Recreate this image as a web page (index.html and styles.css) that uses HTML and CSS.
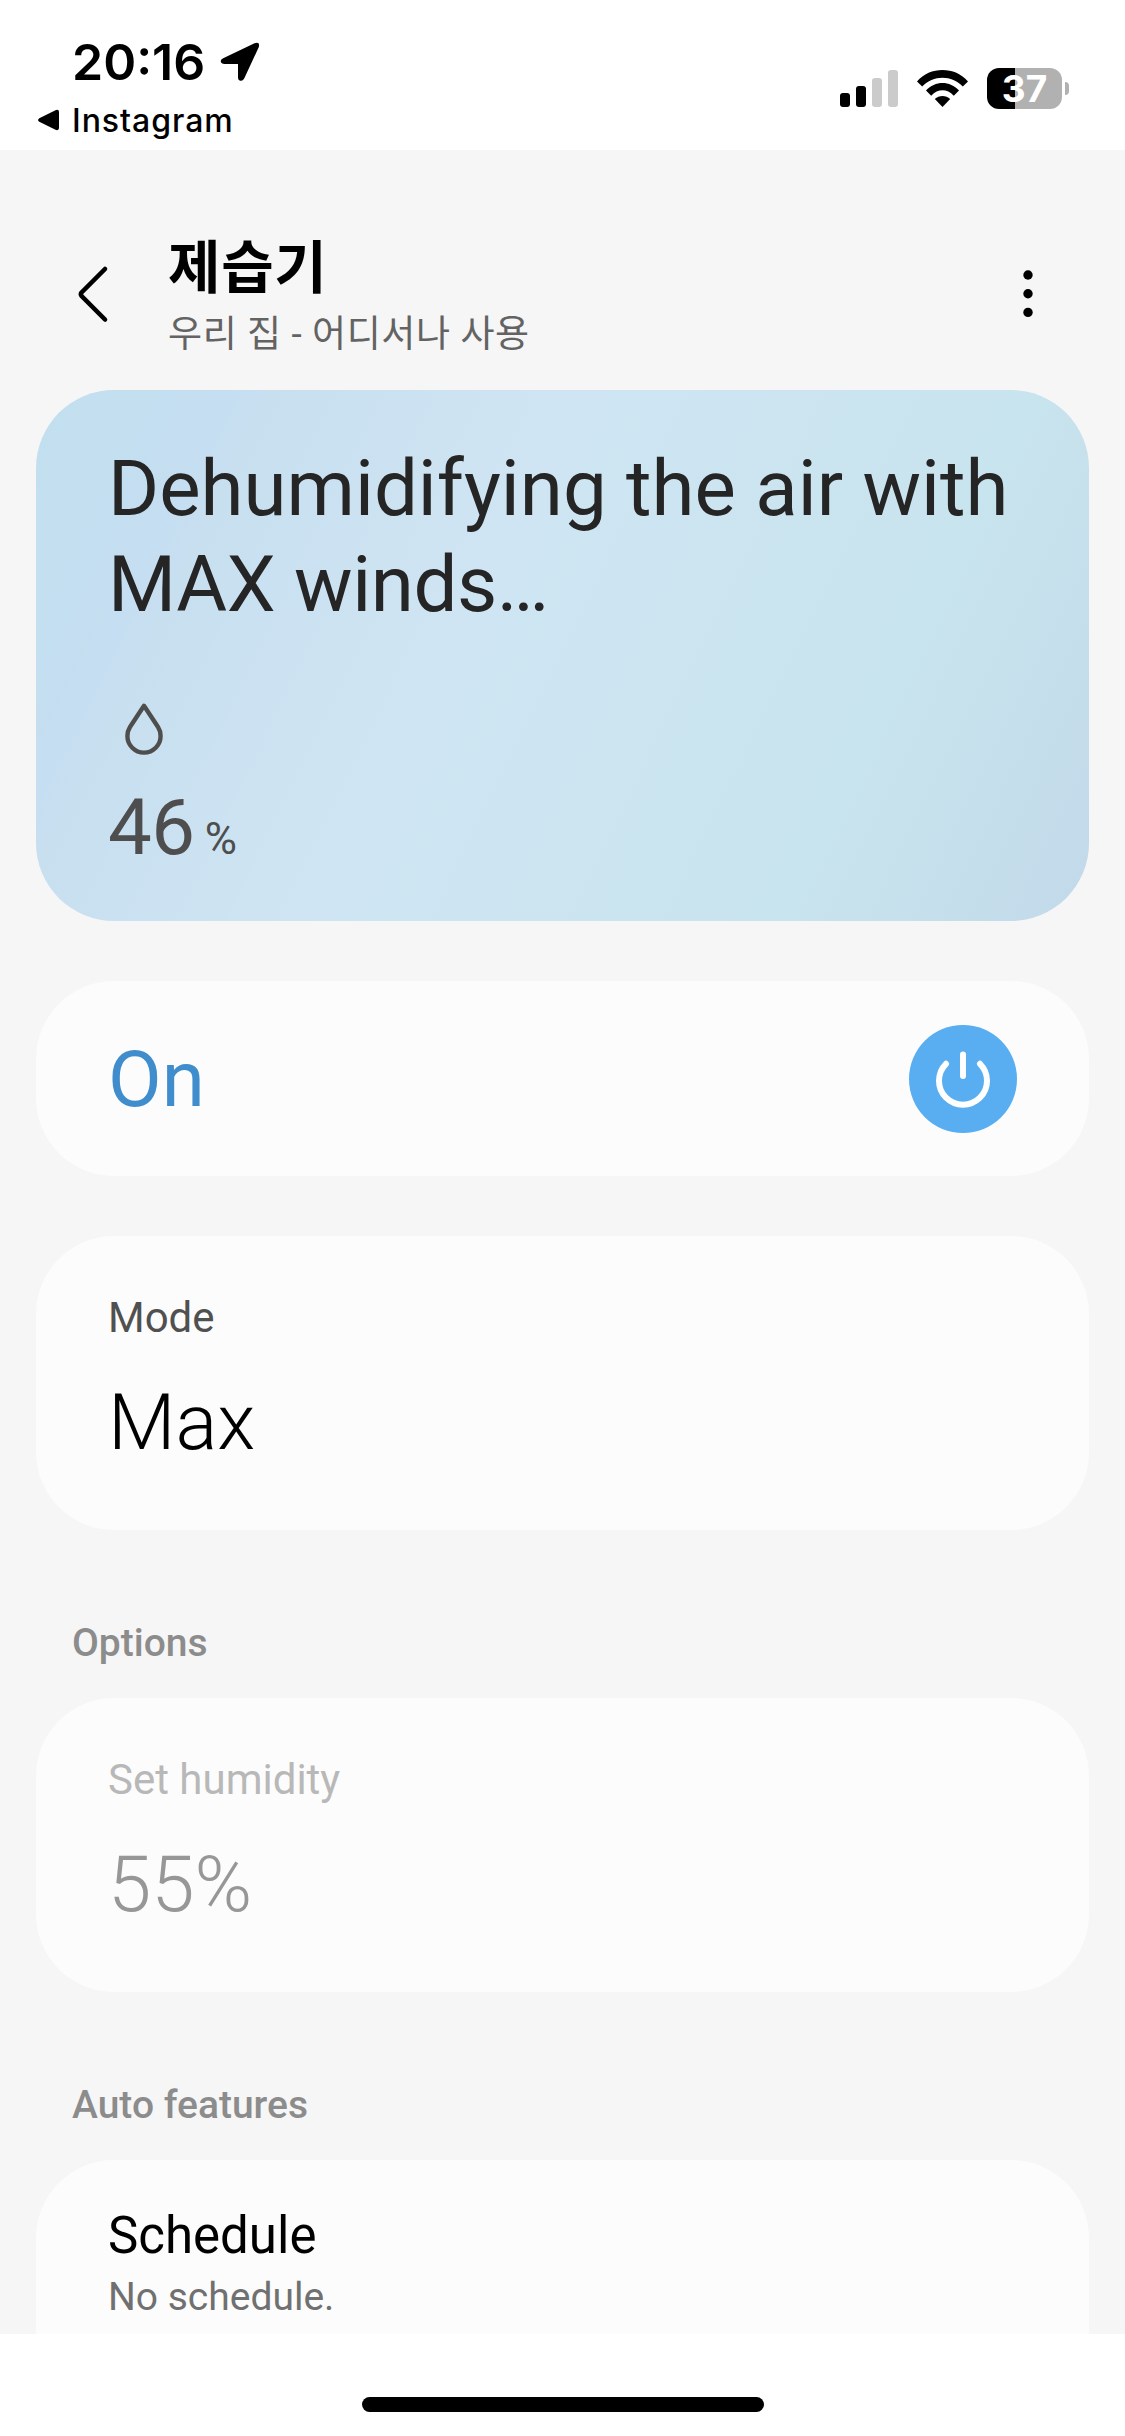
FILE: index.html
```html
<!DOCTYPE html>
<html lang="ko">
<head>
<meta charset="utf-8">
<title>제습기</title>
<link rel="stylesheet" href="styles.css">
</head>
<body>
<header class="status-bar">
  <div class="status-left">
    <div class="clock">
      <span class="time">20:16</span>
      <svg class="location-icon" width="40" height="40" viewBox="0 0 40 40"><path d="M3.2 16.2 L34.5 1.3 Q40.5-.7 38.7 5.3 L24.2 36.5 Q22.6 39.5 19.6 38.5 Q18 37.8 18 35.5 V22 H4.5 Q1.2 22 .7 19.3 Q.6 17.3 3.2 16.2Z"/></svg>
    </div>
    <div class="return-link">
      <svg width="22" height="22" viewBox="0 0 22 22"><path d="M1.3 9.2 L18 1 Q21 .2 21 3 V19 Q21 21.700 18 21 L1.300 12.800 Q-1.200 11 1.300 9.200Z"/></svg>
      <span>Instagram</span>
    </div>
  </div>
  <div class="status-right">
    <svg width="58" height="38" viewBox="0 0 58 38"><rect y="23" width="10" height="14" rx="3"/><rect x="16" y="16" width="10" height="21" rx="3"/><rect x="32" y="8" width="10" height="29" rx="3" fill="#cbcbcb"/><rect x="48" width="10" height="37" rx="3" fill="#cbcbcb"/></svg>
    <svg width="51" height="38" viewBox="0 0 51 38"><path d="M0 11.500 C13-3.800 38-3.800 51 11.500 L45.800 16.500 C35 4.800 16 4.800 5.200 16.500Z"/><path d="M9 20.500 C18 10.500 33 10.500 42 20.500 L36.800 25.700 C30 18.500 21 18.500 14.200 25.700Z"/><path d="M17.800 29 C22 25 29 25 33.200 29 L25.500 37Z"/></svg>
    <div class="battery"><div class="battery-body">37</div><div class="battery-tip"></div></div>
  </div>
</header>

<main class="screen">
  <nav class="app-bar">
    <svg class="back" width="34" height="60" viewBox="0 0 34 60"><path d="M29 5 L5.600 28.500 Q4.200 30.300 5.600 32 L29 55.500"/></svg>
    <div class="titles">
      <h1>제습기</h1>
      <p>우리 집 - 어디서나 사용</p>
    </div>
    <svg class="more" width="10" height="50" viewBox="0 0 10 50"><circle cx="5" cy="5" r="4.700"/><circle cx="5" cy="23.700" r="4.700"/><circle cx="5" cy="42.400" r="4.700"/></svg>
  </nav>

  <section class="card hero">
    <p class="headline">Dehumidifying the air with <span class="headline-end">MAX winds…</span></p>
    <svg class="drop" width="40" height="54" viewBox="0 0 40 54"><path d="M20 4.800 L34 26 Q36.600 30 36.600 35 A16.600 16.600 0 0 1 3.400 35 Q3.400 30 6 26Z"/></svg>
    <div class="reading"><span class="number">46</span><span class="unit">%</span></div>
  </section>

  <section class="card power">
    <span class="state">On</span>
    <button class="power-button" aria-label="Power"><svg width="108" height="108" viewBox="0 0 108 108"><path d="M54 29.500V51M37 38.800A24 24 0 1 0 71 38.800"/></svg></button>
  </section>

  <section class="card setting">
    <p class="label">Mode</p>
    <p class="value">Max</p>
  </section>

  <h2>Options</h2>
  <section class="card setting disabled">
    <p class="label">Set humidity</p>
    <p class="value">55%</p>
  </section>

  <h2>Auto features</h2>
  <section class="card schedule">
    <p class="name">Schedule</p>
    <p class="detail">No schedule.</p>
  </section>
</main>
<footer class="home-area"><div class="home-indicator"></div></footer>
</body>
</html>
```
FILE: styles.css
```css
* { box-sizing: border-box; }
body, h1, h2, p { margin: 0; }
body {
  width: 1125px;
  height: 2436px;
  display: flex;
  flex-direction: column;
  background: #fff;
  color: #000;
  font-family: Roboto, "Noto Sans CJK KR", sans-serif;
  overflow: hidden;
}
svg { display: block; flex: none; }

.status-bar {
  height: 150px;
  flex: none;
  display: flex;
  justify-content: space-between;
  padding: 32px 56px 0 38px;
  font-family: Inter, sans-serif;
}
.clock { display: flex; align-items: center; height: 60px; padding-left: 34px; gap: 15px; }
.time { width: 133px; font-size: 50px; font-weight: 600; line-height: 60px; white-space: nowrap; }
.return-link { display: flex; align-items: center; gap: 12px; height: 56px; font-size: 32px; font-weight: 500; letter-spacing: .95px; }
.status-right { display: flex; align-items: flex-start; gap: 19px; padding-top: 38px; }
.battery { display: flex; align-items: center; gap: 3px; margin-top: -2px; }
.battery-body {
  width: 75px;
  height: 41px;
  border-radius: 12px;
  background: linear-gradient(90deg, #000 28px, #b1b1b1 28px);
  color: #fff;
  font-size: 37px;
  font-weight: 700;
  line-height: 41px;
  text-align: center;
}
.battery-tip { width: 4px; height: 13px; border-radius: 0 5px 5px 0; background: #b1b1b1; }

.screen { height: 2184px; flex: none; background: #f6f6f6; padding: 0 36px; overflow: hidden; }
.app-bar { height: 240px; display: flex; align-items: flex-start; padding: 80px 56px 0 40px; }
.back { margin-top: 34px; fill: none; stroke: #000; stroke-width: 4.6; stroke-linecap: round; }
.titles { flex: 1; padding: 3px 0 0 58px; }
h1 { font-size: 57px; line-height: 72px; font-weight: 700; letter-spacing: .7px; }
.titles p { font-size: 37px; line-height: 60px; letter-spacing: .6px; color: #636363; }
.more { margin-top: 40px; }

.card { border-radius: 78px; background: #fcfcfc; padding: 0 72px; }
.hero {
  height: 531px;
  padding-top: 51px;
  background: linear-gradient(116deg, #c2dff0 0%, #c3dff0 8%, #c5def1 15%, #c8dff0 18%, #cfe5f3 41%, #c8e4ee 76%, #c2d9e9 100%);
}
.headline { font-size: 78px; line-height: 96px; color: #252525; }
.headline-end { letter-spacing: -.45px; }
.drop { margin: 68px 0 0 16px; fill: none; stroke: #4e4e4e; stroke-width: 4.400; stroke-linejoin: round; }
.reading { display: flex; align-items: baseline; height: 96px; margin-top: 25px; gap: 10px; color: #4e4e4e; line-height: 96px; }
.number { font-size: 78px; letter-spacing: -.5px; }
.unit { font-size: 44px; }
.power { height: 195px; margin-top: 60px; display: flex; align-items: center; justify-content: space-between; }
.state { padding-top: 2px; font-size: 78px; color: #408dcd; }
.power-button { width: 108px; height: 108px; padding: 0; border: 0; border-radius: 50%; background: #59aef1; }
.power-button path { fill: none; stroke: #fff; stroke-width: 6; stroke-linecap: round; }
.setting { height: 294px; padding-top: 52px; }
.power + .setting { margin-top: 60px; }
.label { font-size: 42px; line-height: 60px; color: #505050; }
.value { font-size: 78px; line-height: 96px; font-weight: 300; margin-top: 27px; }
.disabled .label { color: #b8b8b8; }
.disabled .value { color: #979797; }
h2 { height: 168px; padding: 83px 36px 0; font-size: 39px; font-weight: 500; line-height: 60px; color: #8c8c8c; }
.schedule { height: 300px; padding-top: 46px; }
.name { font-size: 51px; line-height: 60px; }
.detail { font-size: 39px; line-height: 60px; margin-top: 1px; color: #707070; }
.home-area { flex: 1; display: flex; justify-content: center; align-items: flex-start; padding-top: 63px; }
.home-indicator { width: 402px; height: 15px; border-radius: 8px; background: #000; }
```
